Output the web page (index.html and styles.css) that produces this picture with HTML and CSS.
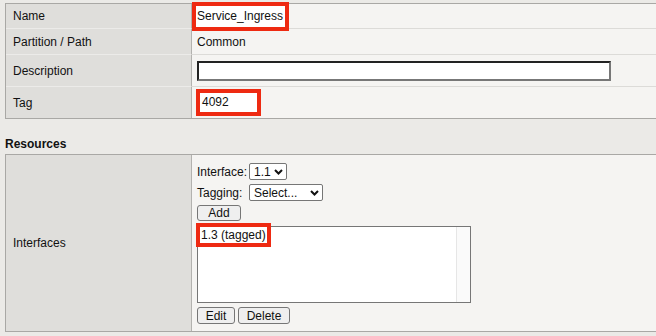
FILE: index.html
```html
<!DOCTYPE html>
<html lang="en">
<head>
  <meta charset="UTF-8">
  <title>VLAN Properties</title>
  <link rel="stylesheet" href="styles.css">
</head>
<body>
  <table class="props">
    <tr class="r-name">
      <td class="label">Name</td>
      <td class="value"><span class="hl hl-name">Service_Ingress</span></td>
    </tr>
    <tr class="r-part">
      <td class="label">Partition / Path</td>
      <td class="value">Common</td>
    </tr>
    <tr class="r-desc">
      <td class="label">Description</td>
      <td class="value"><input class="text-in" type="text"></td>
    </tr>
    <tr class="r-tag">
      <td class="label last">Tag</td>
      <td class="value last"><span class="hl hl-tag">4092</span></td>
    </tr>
  </table>

  <h3 class="section">Resources</h3>

  <table class="props">
    <tr>
      <td class="label last">Interfaces</td>
      <td class="value last res">
        <div class="pick">
          <span>Interface:</span>
          <div class="sel sel-if">1.1<svg width="9" height="6" viewBox="0 0 9 6"><path d="M1 1l3.5 3.5L8 1" fill="none" stroke="#111" stroke-width="2"/></svg></div>
          <span>Tagging:</span>
          <div class="sel sel-tag">Select...<svg width="9" height="6" viewBox="0 0 9 6"><path d="M1 1l3.5 3.5L8 1" fill="none" stroke="#111" stroke-width="2"/></svg></div>
        </div>
        <div><button class="btn btn-add">Add</button></div>
        <div class="listbox">
          <div class="opts"><span class="hl hl-opt">1.3 (tagged)</span></div>
          <div class="scroll"></div>
        </div>
        <div class="btns">
          <button class="btn btn-edit">Edit</button>
          <button class="btn btn-del">Delete</button>
        </div>
      </td>
    </tr>
  </table>
</body>
</html>
```

FILE: styles.css
```css
* { box-sizing:border-box; }
html, body { overflow:hidden; }
body {
  margin:0; padding:3px 0 0 5px; background:#ebeae7; color:#111;
  font-family:"Liberation Sans", Arial, sans-serif; font-size:12px;
}
.props {
  width:100%; border-collapse:separate; border-spacing:0;
  border-top:1px solid #a9a8a5; border-bottom:1px solid #a9a8a5; border-left:1px solid #a9a8a5;
}
.props td { padding:0; vertical-align:middle; }
.label {
  width:186px; padding-left:7px !important; background:#dfdedb;
  border-right:1px solid #b3b2af; border-bottom:1px solid #ecebe9;
}
.value { padding-left:5px !important; background:#f5f4f2; border-bottom:1px solid #dcdbd8; }
.last { border-bottom:none; }
.r-name td { height:25px; }
.r-part td { height:26px; }
.r-desc td { height:32px; }
.r-tag td { height:31px; }

.hl { display:inline-block; background:#fff; outline:4px solid #ee2a12; }
.hl-name { margin-left:-1px; padding:0 1px; height:21px; line-height:21px; width:89px; }
.hl-tag { width:57px; height:19px; line-height:19px; padding-left:2px; margin-left:3px; }

.text-in {
  display:block; width:414px; height:20px; margin:0; padding:0 3px;
  background:#fff; border:2px solid; border-color:#222 #777 #777 #222;
  font:inherit;
}

.section { margin:18px 0 3px; font-size:12px; line-height:14px; font-weight:bold; }

.res { height:176px; padding:8px 0 7px 5px !important; vertical-align:top !important; }
.pick { display:grid; grid-template-columns:52px auto; row-gap:4px; align-items:center; justify-items:start; }
.sel {
  display:flex; align-items:center; justify-content:space-between; height:17px;
  padding:0 3px 0 4px; background:#fff; border:1px solid #767676; border-radius:2px;
}
.sel-if { width:38px; }
.sel-tag { width:74px; }
.btn {
  height:17px; margin:0; padding:0; font:inherit; color:#111;
  background:#efefef; border:1px solid #767676; border-radius:3px;
}
.btn-add { width:44px; height:16px; margin-top:4px; display:block; }
.listbox {
  display:flex; width:274px; height:77px; margin-top:5px;
  background:#fff; border:1px solid #767676;
}
.opts { flex:1; padding:0 2px; line-height:16px; }
.hl-opt { padding:0 1px; line-height:16px; }
.scroll { width:14px; background:#fafafa; border-left:1px solid #e6e6e6; }
.btns { display:flex; gap:3px; margin-top:4px; }
.btn-edit { width:38px; }
.btn-del { width:52px; }
```
